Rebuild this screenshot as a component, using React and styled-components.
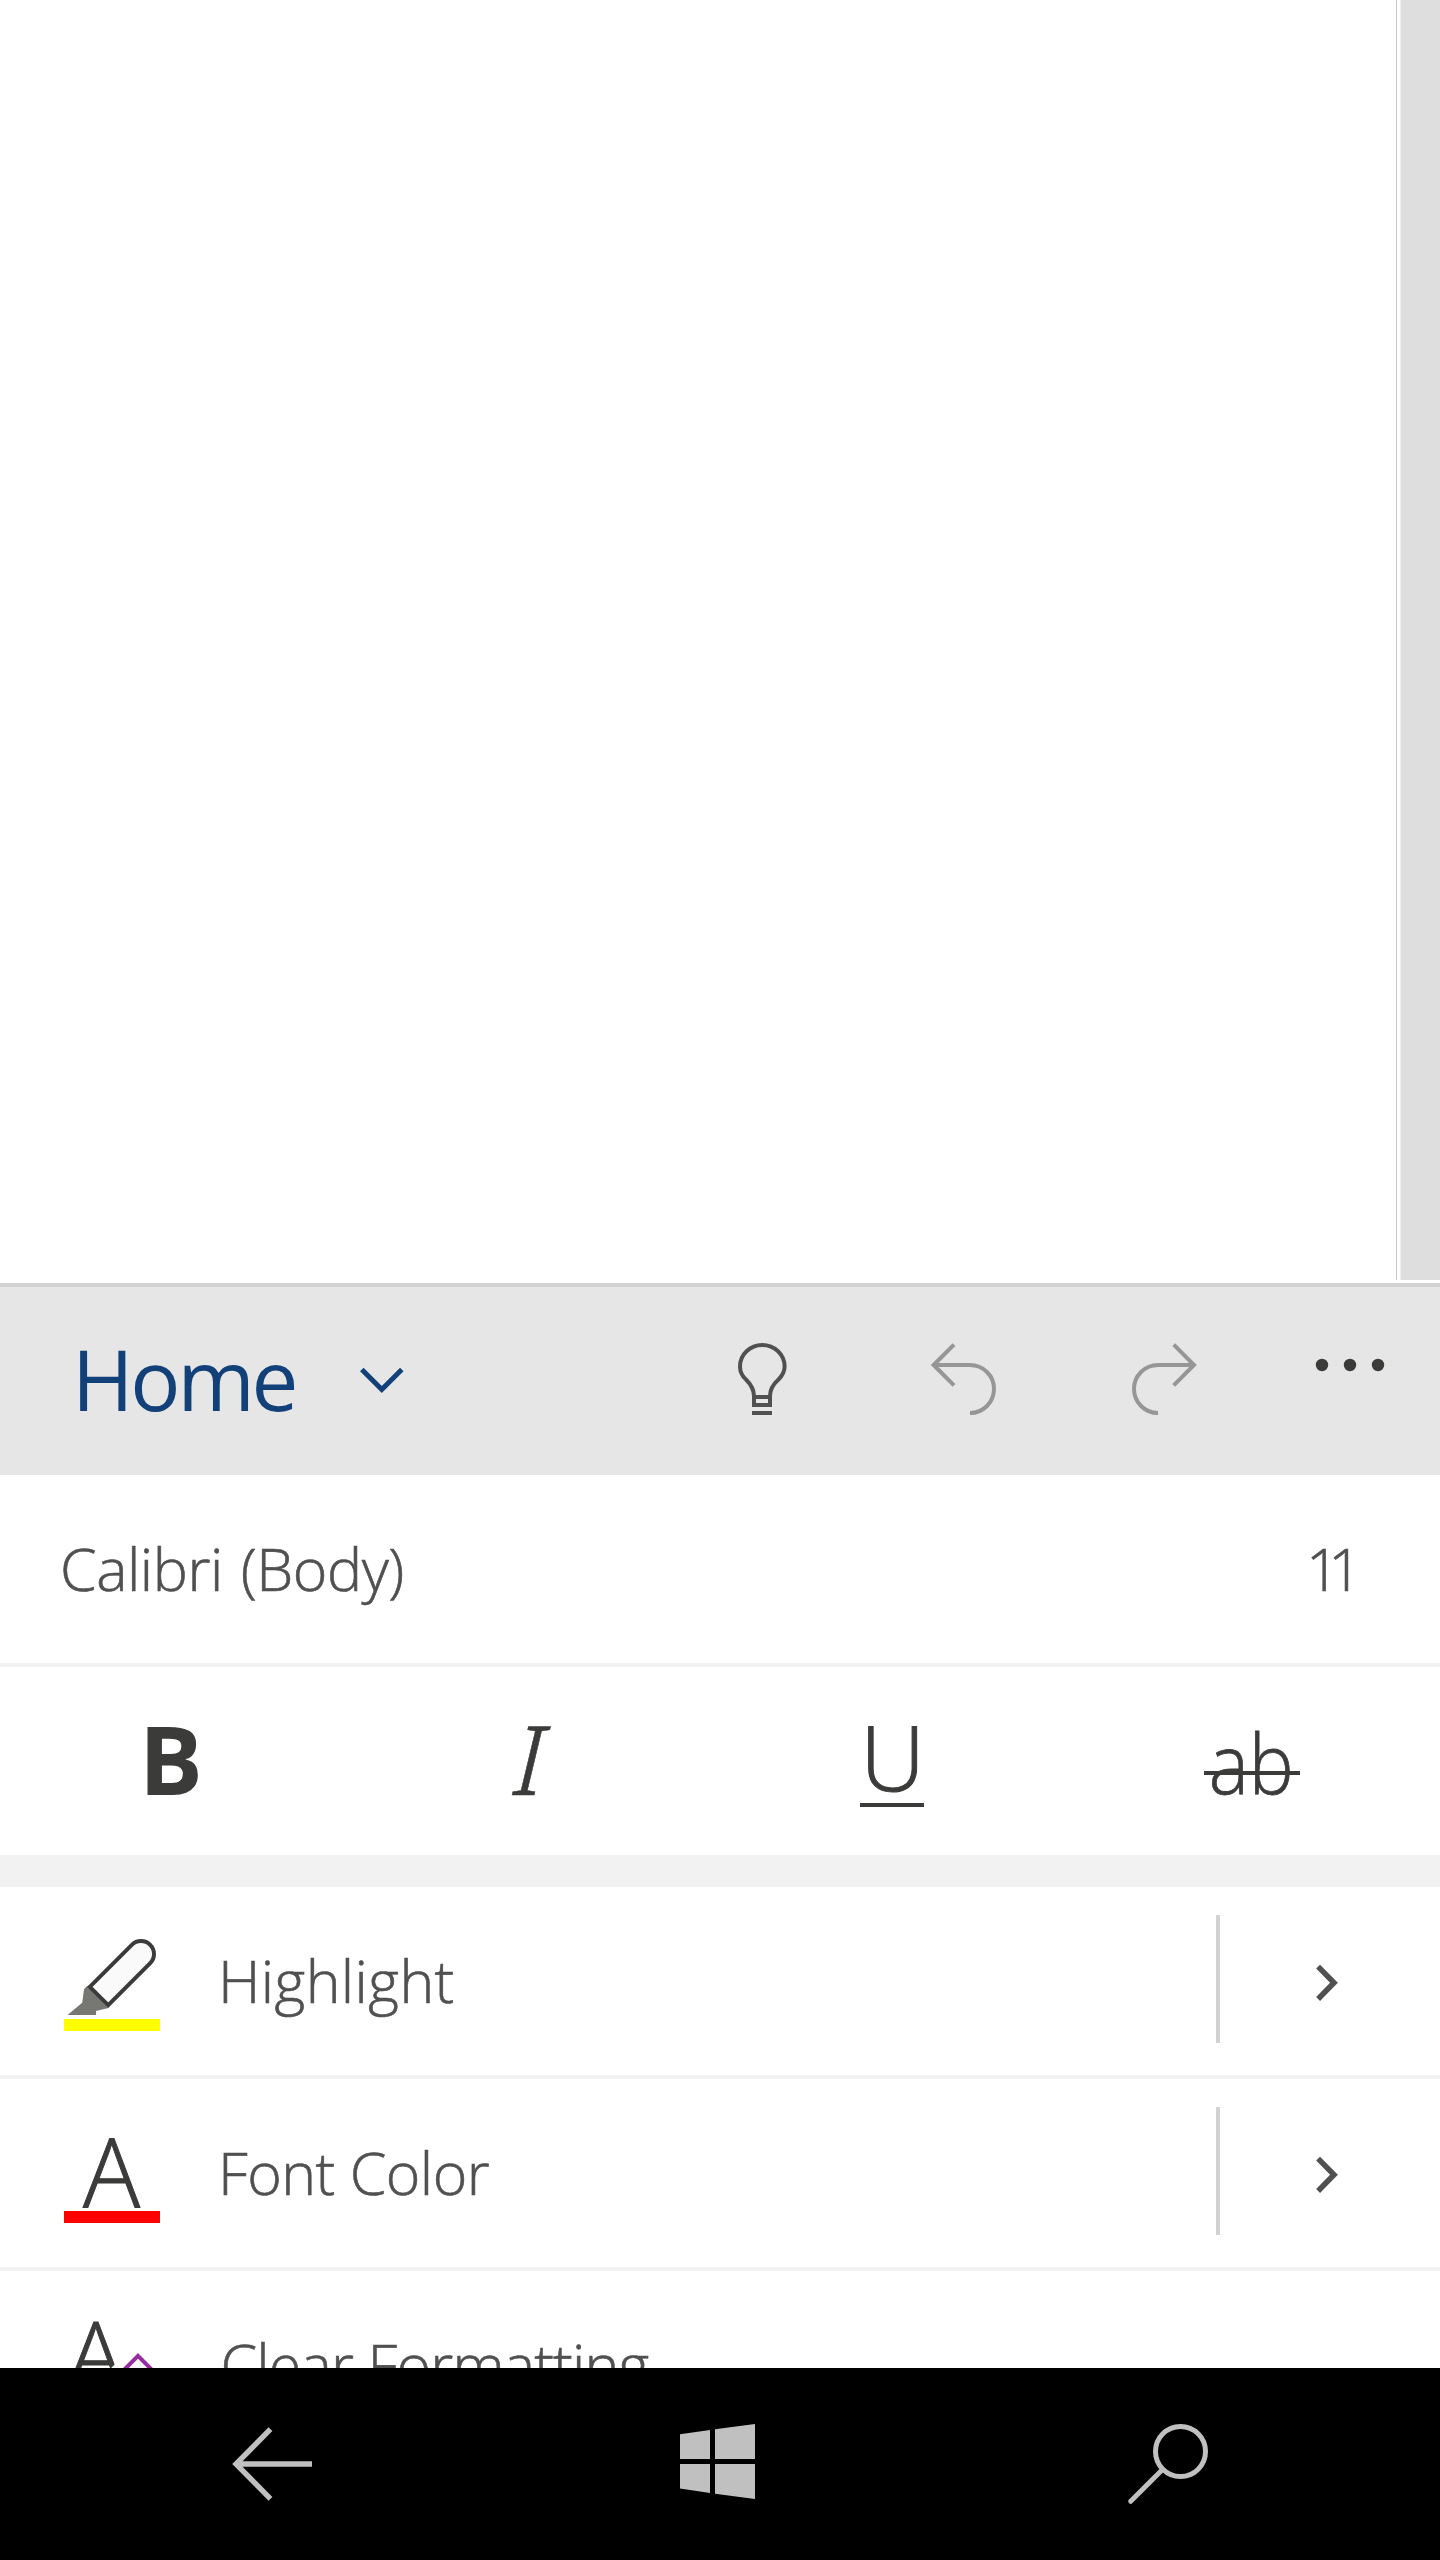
import React from "react";
import styled, { createGlobalStyle } from "styled-components";

const ink = "#3b3b3a";
const body = "#505050";
const hairline = "#f2f2f2";

const GlobalStyle = createGlobalStyle`
  * { box-sizing: border-box; }
  body {
    margin: 0;
    background: #fff;
    font-family: "Open Sans", "Noto Sans", sans-serif;
  }
`;

const Phone = styled.main`
  display: flex;
  flex-direction: column;
  width: 1440px;
  height: 2560px;
  overflow: hidden;
  background: #fff;
`;

const Document = styled.section`
  display: flex;
  height: 1280px;
  flex: none;
  margin-bottom: 3px;
`;

const Page = styled.div`
  width: 1397px;
  border-right: 1px solid #c6c6c6;
`;

const Canvas = styled.div`
  flex: 1;
  margin-left: 3px;
  background: #dedede;
  border-left: 1px solid #efefef;
`;

const Toolbar = styled.header`
  display: flex;
  flex: none;
  height: 192px;
  border-top: 4px solid #d2d2d2;
  background: #e6e6e6;
`;

const TabPicker = styled.button`
  display: flex;
  align-items: center;
  width: 662px;
  padding: 0 0 0 72px;
  border: 0;
  background: none;
  font-family: inherit;
  color: #124078;
`;

const TabName = styled.span`
  width: 287px;
  padding-bottom: 5px;
  font-size: 83.5px;
  line-height: 183px;
  letter-spacing: -3.2px;
  text-align: left;
`;

const Action = styled.button`
  display: flex;
  justify-content: center;
  align-items: flex-start;
  width: ${(p) => p.$width || 201}px;
  padding: 55px ${(p) => p.$inset || 0}px 0 0;
  border: 0;
  background: none;
  color: ${(p) => (p.$disabled ? "#969696" : body)};
`;

const Icon = styled.svg`
  display: block;
  flex: none;
  fill: none;
  stroke: currentColor;
  stroke-width: ${(p) => p.$weight || 4};
`;

const Row = styled.div`
  display: flex;
  align-items: flex-start;
  flex: none;
  height: ${(p) => (p.$last ? 97 : p.$band ? 220 : 192)}px;
  border-bottom: ${(p) => (p.$last ? 0 : p.$band ? 32 : 4)}px solid ${hairline};
  overflow: hidden;
`;

const Label = styled.span`
  height: 188px;
  margin-left: ${(p) => p.$indent || 0}px;
  font-size: 59px;
  font-weight: 300;
  line-height: 186px;
  letter-spacing: ${(p) => p.$track || 0}px;
  word-spacing: ${(p) => p.$gap || 0}px;
  white-space: nowrap;
  color: ${body};
  -webkit-text-stroke: 0.6px ${body};
`;

const FontSize = styled(Label)`
  margin-left: auto;
  width: 134px;
`;

const Toggle = styled.button`
  position: relative;
  width: 360px;
  height: 188px;
  padding: 0 15px 0 0;
  border: 0;
  background: none;
  color: ${ink};
  font-family: inherit;
  text-align: center;

  &::after {
    content: "";
    position: absolute;
    display: ${(p) => (p.$rule ? "block" : "none")};
    left: ${(p) => (p.$rule === "strike" ? 124 : 140)}px;
    top: ${(p) => (p.$rule === "strike" ? 104 : 136)}px;
    width: ${(p) => (p.$rule === "strike" ? 96 : 64)}px;
    height: 4px;
    background: ${ink};
  }
`;

const Glyph = styled.span`
  display: block;
  height: 188px;
  font-size: ${(p) => p.$size}px;
  font-weight: 300;
  line-height: ${(p) => p.$line}px;
  -webkit-text-stroke: ${(p) => p.$stroke || 0}px ${ink};
`;

const BoldGlyph = styled(Glyph)`
  padding-right: 3px;
  font-weight: 700;
`;

const ItalicGlyph = styled(Glyph)`
  font-family: "Noto Sans", sans-serif;
  font-style: italic;
  padding-right: 6px;
  transform: scaleX(1.14);
`;

const NarrowGlyph = styled(Glyph)`
  padding-right: 3px;
  transform: scaleX(0.91);
`;

const Command = styled.button`
  display: flex;
  align-items: center;
  flex: 1;
  height: 188px;
  padding: 0 0 0 64px;
  border: 0;
  background: none;
  font-family: inherit;
`;

const IconSlot = styled.span`
  position: relative;
  width: 96px;
  height: 188px;
  flex: none;
  margin-right: 58px;
`;

const Swatch = styled.span`
  display: block;
  height: 12px;
  background: ${(p) => p.$color};
`;

const LetterA = styled.span`
  display: block;
  height: ${(p) => (p.$small ? 188 : 132)}px;
  padding-right: ${(p) => (p.$small ? 32.5 : 1)}px;
  font-size: ${(p) => (p.$small ? 92 : 95)}px;
  font-weight: 300;
  line-height: ${(p) => (p.$small ? 164 : 182)}px;
  text-align: center;
  color: ${ink};
  -webkit-text-stroke: 1px ${ink};
`;

const Eraser = styled.svg`
  position: absolute;
  left: 36px;
  top: 72px;
`;

const Marker = styled.svg`
  display: block;
  margin-top: 48px;
`;

const More = styled.button`
  display: flex;
  align-items: center;
  width: 224px;
  height: 128px;
  margin-top: 28px;
  padding: 7px 0 0 95px;
  border: 0;
  border-left: 4px solid #d2d2d2;
  background: none;
  color: ${body};
`;

const NavBar = styled.nav`
  display: flex;
  justify-content: space-between;
  align-items: center;
  flex: none;
  height: 192px;
  padding: 0 232px;
  background: #000;
  color: #c0c0c0;
`;

const MoreOptions = () => (
  <More aria-label="More options">
    <Icon $weight={5.5} width="24" height="40" viewBox="1315 1963 24 40">
      <path d="M1318.1 1966.6 L1334 1982.8 L1318.1 1999" />
    </Icon>
  </More>
);

export default function App() {
  return (
    <>
      <GlobalStyle />
      <Phone>
        <Document>
          <Page />
          <Canvas />
        </Document>

        <Toolbar>
          <TabPicker>
            <TabName>Home</TabName>
            <Icon $weight={5} width="46" height="30" viewBox="359 1366 46 30">
              <path d="M361.8 1369.5 L381.8 1389.5 L401.8 1369.5" />
            </Icon>
          </TabPicker>
          <Action aria-label="Tell me">
            <Icon width="50" height="74" viewBox="738 1342 50 74">
              <path d="M754 1396 C754 1389 750 1383.5 746 1379.5 C742 1376 740 1371.5 740 1366.5 A22.3 21.5 0 0 1 784.6 1366.5 C784.6 1371.5 782 1376 778.5 1379.5 C774 1383.5 770 1389 770 1396" />
              <path d="M754 1395 V1405 H770 V1395 M754 1397 H770 M752 1413 H772" />
            </Icon>
          </Action>
          <Action $disabled aria-label="Undo">
            <Icon width="66" height="74" viewBox="931 1342 66 74">
              <path d="M954 1344.7 L933.7 1365 L954 1385.3 M934 1365 H970 A24 24 0 0 1 970 1413" />
            </Icon>
          </Action>
          <Action $disabled aria-label="Redo">
            <Icon width="66" height="74" viewBox="1132 1342 66 74">
              <path d="M1173.7 1344.7 L1194 1365 L1173.7 1385.3 M1194 1365 H1158 A24 24 0 0 0 1158 1413" />
            </Icon>
          </Action>
          <Action $width={175} $inset={5} aria-label="More">
            <Icon width="70" height="74" viewBox="1315 1342 70 74">
              <g fill={ink} stroke="none">
                <circle cx="1322" cy="1365" r="6.2" />
                <circle cx="1350" cy="1365" r="6.2" />
                <circle cx="1378" cy="1365" r="6.2" />
              </g>
            </Icon>
          </Action>
        </Toolbar>

        <Row>
          <Label $indent={60} $track={-0.45} $gap={3}>Calibri (Body)</Label>
          <FontSize $track={-11.4}>11</FontSize>
        </Row>

        <Row $band>
          <Toggle aria-label="Bold">
            <BoldGlyph $size={95} $line={182}>B</BoldGlyph>
          </Toggle>
          <Toggle aria-label="Italic">
            <ItalicGlyph $size={95} $line={182} $stroke={0.5}>I</ItalicGlyph>
          </Toggle>
          <Toggle $rule="underline" aria-label="Underline">
            <Glyph $size={90} $line={179} $stroke={1}>U</Glyph>
          </Toggle>
          <Toggle $rule="strike" aria-label="Strikethrough">
            <NarrowGlyph $size={83} $line={190} $stroke={0.8}>ab</NarrowGlyph>
          </Toggle>
        </Row>

        <Row>
          <Command>
            <IconSlot>
              <Marker width="96" height="84" viewBox="64 1935 96 84">
                <path fill="#777773" d="M87 1986 L84 1989.3 L82.2 2002.8 L67.5 2015 H96 V2011 L108.5 2008 Z" />
                <path
                  fill="#fafafa"
                  stroke={ink}
                  strokeWidth="4"
                  d="M89.8 1986.8 L131.8 1944.8 A13 13 0 0 1 150.2 1963.2 L108.2 2005.2 Z"
                />
              </Marker>
              <Swatch $color="#ffff00" />
            </IconSlot>
            <Label $track={0.4}>Highlight</Label>
          </Command>
          <MoreOptions />
        </Row>

        <Row>
          <Command>
            <IconSlot>
              <LetterA>A</LetterA>
              <Swatch $color="#ff0000" />
            </IconSlot>
            <Label $track={-0.5}>Font Color</Label>
          </Command>
          <MoreOptions />
        </Row>

        <Row $last>
          <Command>
            <IconSlot>
              <LetterA $small>A</LetterA>
              <Eraser width="80" height="60" viewBox="100 2343 80 60">
                <path fill="#fff" stroke="#fff" strokeWidth="21" d="M138 2356 L158 2376 L138 2396 L118 2376 Z" />
                <path fill="#f7f7f7" stroke="#962d9e" strokeWidth="4" d="M138 2355.9 L158 2375.9 L138 2395.9 L118 2375.9 Z" />
              </Eraser>
            </IconSlot>
            <Label $indent={2.5} $track={-0.8}>Clear Formatting</Label>
          </Command>
        </Row>

        <NavBar>
          <Icon $weight={5.4} width="80" height="80" viewBox="232 2424 80 80">
            <path d="M270.5 2429.2 L236 2464 L270.5 2498.8 M236 2464 H312" />
          </Icon>
          <Icon width="82" height="80" viewBox="678 2424 82 80">
            <path
              fill="currentColor"
              stroke="none"
              d="M680 2434.3 L710 2430 V2459 H680 Z M715 2429.3 L755 2424 V2459 H715 Z M680 2464 H710 V2493 L680 2488.5 Z M715 2464 H755 V2499 L715 2493.7 Z"
            />
          </Icon>
          <Icon $weight={5} width="82" height="84" viewBox="1126 2422 82 84">
            <circle cx="1180.5" cy="2451.5" r="25" />
            <path strokeLinecap="round" d="M1162 2470 L1130.7 2501.3" />
          </Icon>
        </NavBar>
      </Phone>
    </>
  );
}
